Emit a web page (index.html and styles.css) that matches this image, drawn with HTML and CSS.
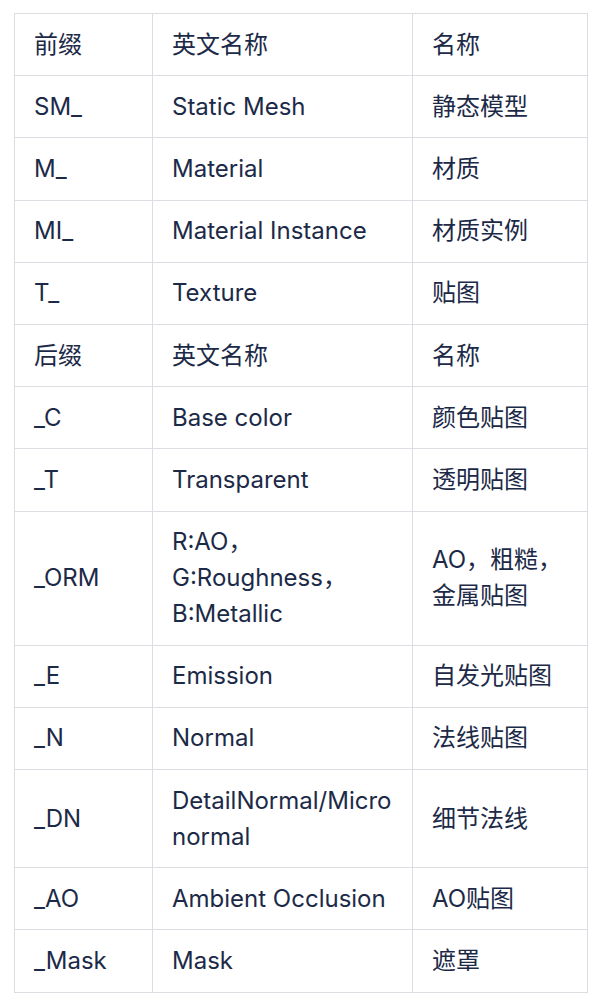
FILE: index.html
```html
<!DOCTYPE html>
<html lang="zh">
<head>
<meta charset="utf-8">
<link rel="stylesheet" href="styles.css">
</head>
<body>
<table class="tbl">
<colgroup><col class="c1"><col class="c2"><col class="c3"></colgroup>
<tbody>
<tr><td>前缀</td><td>英文名称</td><td>名称</td></tr>
<tr><td>SM_</td><td>Static Mesh</td><td>静态模型</td></tr>
<tr><td>M_</td><td>Material</td><td>材质</td></tr>
<tr><td>MI_</td><td>Material Instance</td><td>材质实例</td></tr>
<tr><td>T_</td><td>Texture</td><td>贴图</td></tr>
<tr><td>后缀</td><td>英文名称</td><td>名称</td></tr>
<tr><td>_C</td><td>Base color</td><td>颜色贴图</td></tr>
<tr><td>_T</td><td>Transparent</td><td>透明贴图</td></tr>
<tr><td>_ORM</td><td>R:AO，<br>G:Roughness，<br>B:Metallic</td><td>AO，粗糙，<br>金属贴图</td></tr>
<tr><td>_E</td><td>Emission</td><td>自发光贴图</td></tr>
<tr><td>_N</td><td>Normal</td><td>法线贴图</td></tr>
<tr><td>_DN</td><td>DetailNormal/Micro<br>normal</td><td>细节法线</td></tr>
<tr><td>_AO</td><td>Ambient Occlusion</td><td>AO贴图</td></tr>
<tr><td>_Mask</td><td>Mask</td><td>遮罩</td></tr>
</tbody>
</table>
</body>
</html>
```
FILE: styles.css
```css
html, body {
  margin: 0;
  padding: 0;
  background: #ffffff;
}
body {
  padding: 13px 0 0 14px;
  font-family: Inter, "Noto Sans CJK SC", sans-serif;
  color: #1c2a48;
}
.tbl {
  border-collapse: collapse;
  table-layout: fixed;
  width: 573px;
  font-size: 24px;
  line-height: 36px;
}
.c1 { width: 138px; }
.c2 { width: 260px; }
.c3 { width: 175px; }
.tbl td {
  border: 1px solid #dcdce3;
  padding: 12.6px 19px 12.6px 19px;
  vertical-align: middle;
  text-align: left;
  white-space: nowrap;
}
```
